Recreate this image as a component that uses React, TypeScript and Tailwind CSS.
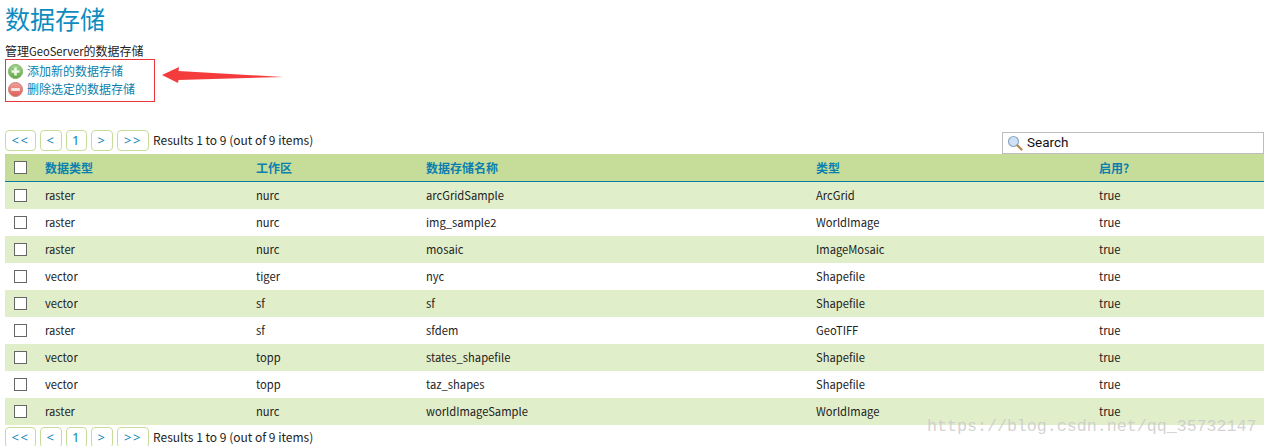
const rows = [
    ['raster', 'nurc', 'arcGridSample', 'ArcGrid', 'true'],
    ['raster', 'nurc', 'img_sample2', 'WorldImage', 'true'],
    ['raster', 'nurc', 'mosaic', 'ImageMosaic', 'true'],
    ['vector', 'tiger', 'nyc', 'Shapefile', 'true'],
    ['vector', 'sf', 'sf', 'Shapefile', 'true'],
    ['raster', 'sf', 'sfdem', 'GeoTIFF', 'true'],
    ['vector', 'topp', 'states_shapefile', 'Shapefile', 'true'],
    ['vector', 'topp', 'taz_shapes', 'Shapefile', 'true'],
    ['raster', 'nurc', 'worldImageSample', 'WorldImage', 'true'],
];

const headers = ['数据类型', '工作区', '数据存储名称', '类型', '启用?'];

const pageButtons = [
    { label: '<<', width: 'w-[31px]' },
    { label: '<', width: 'w-[22px]' },
    { label: '1', width: 'w-[21px]' },
    { label: '>', width: 'w-[22px]' },
    { label: '>>', width: 'w-[32px]' },
];

function Pager() {
    return (
        <div className="flex items-center h-[21px]">
            <div className="flex gap-[4px]">
                {pageButtons.map((b) => (
                    <span
                        key={b.label}
                        className={`${b.width} h-[21px] flex items-center justify-center border border-[#c6dd9a] rounded-[4px] text-[#0b85b5] font-['Noto_Sans',sans-serif] text-[13px] tracking-[1.5px] bg-white`}
                    >
                        {b.label}
                    </span>
                ))}
            </div>
            <span className="ml-[4px] text-[12px] text-[#222] -mt-[1px]">Results 1 to 9 (out of 9 items)</span>
        </div>
    );
}

function Checkbox() {
    return <span className="block w-[13px] h-[13px] border border-[#666] bg-white" />;
}

function RoundIcon({ kind }: { kind: 'add' | 'remove' }) {
    const add = kind === 'add';
    return (
        <svg width="15" height="15" viewBox="0 0 15 15" className="shrink-0">
            <defs>
                <linearGradient id={`fill-${kind}`} x1="0" y1="0" x2="0" y2="1">
                    <stop offset="0" stopColor={add ? '#a5d88c' : '#f0a09a'} />
                    <stop offset="1" stopColor={add ? '#5fa845' : '#dc5f58'} />
                </linearGradient>
            </defs>
            <circle cx="7.5" cy="7.5" r="7" fill={`url(#fill-${kind})`} stroke={add ? '#7fae6a' : '#c9807b'} />
            {add ? (
                <path d="M7.5 3.5v8M3.5 7.5h8" stroke="#eef7e8" strokeWidth="2.6" />
            ) : (
                <path d="M3.2 7.5h8.6" stroke="#fbeaea" strokeWidth="2.8" />
            )}
        </svg>
    );
}

export default function App() {
    return (
        <div className="relative w-[1268px] h-[446px] overflow-hidden bg-white font-['Noto_Sans_CJK_SC','Noto_Sans',sans-serif] text-[12px] text-[#222]">
            <div className="pl-[5px] pr-[4px]">
                <h1 className="h-[43px] text-[25px] leading-[36px] font-normal text-[#0e8cc0]">数据存储</h1>
                <p className="h-[16px] text-[12px] leading-[15px] text-[#222]">
                    管理<span className="text-[11.2px]">GeoServer</span>的数据存储
                </p>
                <div className="w-[150px] h-[43px] border border-[#e8383d] pl-[2px] pt-[2px]">
                    <div className="flex items-center gap-[4px] h-[18px] text-[#0b7fae]">
                        <RoundIcon kind="add" />
                        <span>添加新的数据存储</span>
                    </div>
                    <div className="flex items-center gap-[4px] h-[18px] text-[#0b7fae]">
                        <RoundIcon kind="remove" />
                        <span>删除选定的数据存储</span>
                    </div>
                </div>

                <div className="flex items-end justify-between h-[52px]">
                    <div className="mb-[3px]">
                        <Pager />
                    </div>
                    <div className="w-[262px] h-[22px] border border-[#bdbdbd] flex items-center pl-[4px] gap-[4px] bg-white">
                        <svg width="16" height="16" viewBox="0 0 16 16">
                            <circle cx="6.5" cy="6.5" r="5" fill="#cfe2f5" stroke="#8fa9c4" strokeWidth="1.2" />
                            <path d="M10.5 10.5l4 4" stroke="#b98a52" strokeWidth="2.4" strokeLinecap="round" />
                        </svg>
                        <span className="text-[13.5px] leading-[18px] -mt-[3px] text-[#111] font-['Roboto',sans-serif]">Search</span>
                    </div>
                </div>

                <div className="grid grid-cols-[40px_211px_170px_390px_283px_1fr] items-center h-[28px] bg-[#c6dd9a] border-b border-[#0a7ba6] font-bold text-[#0b7fae]">
                    <div className="pl-[9px]">
                        <Checkbox />
                    </div>
                    {headers.map((h) => (
                        <div key={h}>{h}</div>
                    ))}
                </div>

                {rows.map((row, i) => (
                    <div
                        key={row[2]}
                        className={`grid grid-cols-[40px_211px_170px_390px_283px_1fr] items-center h-[27px] ${i % 2 === 0 ? 'bg-[#e1eeca]' : 'bg-white'}`}
                    >
                        <div className="pl-[9px]">
                            <Checkbox />
                        </div>
                        {row.map((cell, j) => (
                            <div key={j} className="text-[11.2px] -mt-[1px]">{cell}</div>
                        ))}
                    </div>
                ))}

                <div className="mt-[2px]">
                    <Pager />
                </div>
            </div>

            {/* annotation arrow drawn over the screenshot */}
            <svg className="absolute left-[160px] top-[64px]" width="126" height="22" viewBox="0 0 126 22">
                <path d="M2 11 L19 3 L18.5 7 L123 13 L18.5 16 L18 19 Z" fill="#f53c3c" />
            </svg>

            {/* blog watermark */}
            <span className="absolute left-[927px] top-[415px] font-['Liberation_Mono',monospace] text-[16.65px] text-[#c8c8c8]/80">
                https://blog.csdn.net/qq_35732147
            </span>
        </div>
    );
}
